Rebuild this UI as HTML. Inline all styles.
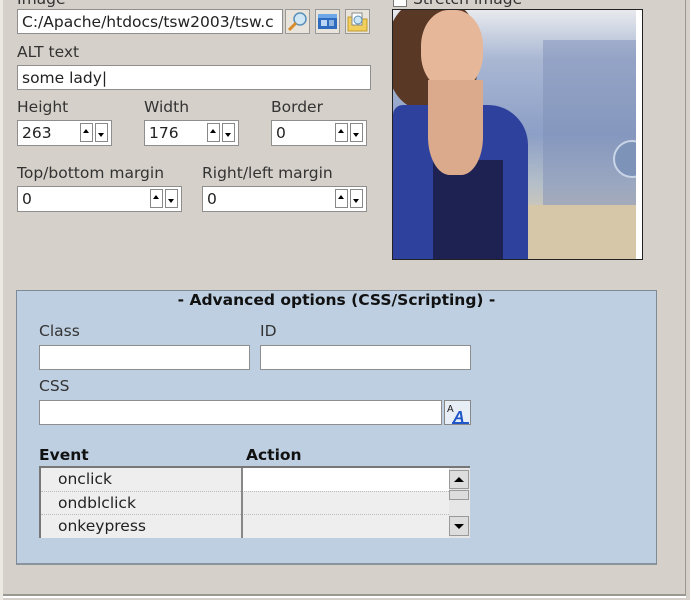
<!DOCTYPE html>
<html><head><meta charset="utf-8"><style>
body{margin:0;width:690px;height:600px;background:#d5d1ca;position:relative;overflow:hidden;font-family:"DejaVu Sans","Liberation Sans",sans-serif;font-size:15.5px;color:#222}
.a{position:absolute}
.lbl{position:absolute;font-size:15.5px;line-height:18px;color:#333}
.in{position:absolute;background:#fff;border:1px solid #8e8e8e;box-sizing:border-box;font-size:15.5px;line-height:24px;padding-left:4px;color:#222;white-space:nowrap;overflow:hidden}
.sp{position:absolute;width:30px;height:20px;top:2px}
.sp b{position:absolute;top:0;width:13px;height:19px;border:1px solid #888;background:#fff;box-sizing:border-box}
.sp b:first-child{left:0}.sp b:last-child{left:15px}
.sp b:first-child:after{content:"";position:absolute;left:2px;top:5px;border:3px solid transparent;border-bottom:4px solid #000;border-top:0}
.sp b:last-child:after{content:"";position:absolute;left:2px;top:9px;border:3px solid transparent;border-top:4px solid #000;border-bottom:0}
.ib{position:absolute;top:9px;width:25px;height:25px;border:1px solid #999;box-sizing:border-box;background:#e8e4dc}
.row{position:absolute;left:0;width:408px;height:23px;font-size:15.5px;line-height:23px}
</style></head><body>
<div class="a" style="left:0;top:0;width:3px;height:600px;background:#ece9e3"></div>
<div class="a" style="left:685px;top:0;width:1px;height:596px;background:#9a9891"></div>
<div class="a" style="left:3px;top:594px;width:683px;height:2px;background:#9a9891"></div>
<div class="a" style="left:3px;top:596px;width:683px;height:2px;background:#fff"></div>

<div class="lbl" style="left:17px;top:-10px">Image</div>
<div class="in" style="left:17px;top:9px;width:266px;height:25px">C:/Apache/htdocs/tsw2003/tsw.c</div>
<div class="ib" style="left:285px"><svg width="23" height="23"><circle cx="14" cy="9" r="6" fill="#cfe6f5" stroke="#5a8fb8" stroke-width="1.5"/><line x1="10" y1="13" x2="3" y2="20" stroke="#d98a2a" stroke-width="3"/></svg></div>
<div class="ib" style="left:315px"><svg width="23" height="23"><rect x="2" y="4" width="19" height="15" fill="#2f6cc0"/><rect x="2" y="4" width="19" height="4" fill="#6fa8e8"/><rect x="5" y="10" width="6" height="6" fill="#bcd6f5"/><rect x="13" y="10" width="5" height="6" fill="#8fb4e0"/></svg></div>
<div class="ib" style="left:345px"><svg width="23" height="23"><path d="M2 7h7l2 2h10v12H2z" fill="#f2cf5a" stroke="#c09a30"/><rect x="6" y="3" width="10" height="12" fill="#fff" stroke="#888"/><circle cx="12" cy="10" r="4" fill="#cfe6f5" stroke="#5a8fb8"/></svg></div>

<div class="lbl" style="left:17px;top:43px">ALT text</div>
<div class="in" style="left:17px;top:65px;width:354px;height:25px">some lady|</div>

<div class="lbl" style="left:17px;top:98px">Height</div>
<div class="lbl" style="left:144px;top:98px">Width</div>
<div class="lbl" style="left:271px;top:98px">Border</div>
<div class="in" style="left:17px;top:120px;width:95px;height:26px">263<div class="sp" style="left:62px"><b></b><b></b></div></div>
<div class="in" style="left:144px;top:120px;width:95px;height:26px">176<div class="sp" style="left:62px"><b></b><b></b></div></div>
<div class="in" style="left:271px;top:120px;width:96px;height:26px">0<div class="sp" style="left:63px"><b></b><b></b></div></div>

<div class="lbl" style="left:17px;top:164px">Top/bottom margin</div>
<div class="lbl" style="left:202px;top:164px">Right/left margin</div>
<div class="in" style="left:17px;top:186px;width:165px;height:26px">0<div class="sp" style="left:132px"><b></b><b></b></div></div>
<div class="in" style="left:202px;top:186px;width:165px;height:26px">0<div class="sp" style="left:132px"><b></b><b></b></div></div>

<div class="a" style="left:393px;top:-5px;width:12px;height:10px;background:#fff;border:1px solid #777"></div>
<div class="lbl" style="left:413px;top:-10px">Stretch image</div>

<div class="a" style="left:392px;top:9px;width:251px;height:251px;border:1px solid #222;box-sizing:border-box;overflow:hidden;background:linear-gradient(180deg,#e8eaee 0%,#a9b7d3 20%,#8c9fc6 50%,#b5bfc9 70%,#d8cbb2 85%,#e3dccf 100%)">
<div class="a" style="left:150px;top:30px;width:95px;height:180px;background:#7f8fb7;opacity:.5"></div>
<div class="a" style="left:-5px;top:-10px;width:90px;height:110px;background:#5a3826;border-radius:40%"></div>
<div class="a" style="left:28px;top:0px;width:62px;height:80px;border-radius:45%;background:#e6b899"></div>
<div class="a" style="left:0;top:95px;width:135px;height:160px;background:#2e419c;border-radius:10px 40px 0 0"></div>
<div class="a" style="left:40px;top:150px;width:70px;height:100px;background:#1d2252"></div>
<div class="a" style="left:35px;top:70px;width:55px;height:95px;background:#dba98c;border-radius:0 0 40% 40%"></div>
<div class="a" style="left:135px;top:195px;width:110px;height:60px;background:#d7c7a9"></div>
<div class="a" style="left:220px;top:130px;width:34px;height:34px;border-radius:50%;background:#7e93b8;border:2px solid #c9d4e6"></div>
<div class="a" style="left:243px;top:0;width:8px;height:251px;background:#fff"></div>
</div>

<div class="a" style="left:16px;top:290px;width:641px;height:275px;background:#bdcfe0;border:1px solid #7e8a96;box-sizing:border-box;border-bottom:2px solid #8a949c"></div>
<div class="lbl" style="left:16px;top:291px;width:641px;text-align:center;font-weight:bold;color:#111">- Advanced options (CSS/Scripting) -</div>
<div class="lbl" style="left:39px;top:322px">Class</div>
<div class="lbl" style="left:260px;top:322px">ID</div>
<div class="in" style="left:39px;top:345px;width:211px;height:25px"></div>
<div class="in" style="left:260px;top:345px;width:211px;height:25px"></div>
<div class="lbl" style="left:39px;top:377px">CSS</div>
<div class="in" style="left:39px;top:400px;width:403px;height:25px"></div>
<div class="a" style="left:444px;top:400px;width:27px;height:25px;border:1px solid #888;box-sizing:border-box;background:#e8eef5"><svg width="25" height="23"><text x="2" y="11" font-size="10" font-family="Liberation Sans" fill="#222">A</text><text x="8" y="21" font-size="16" font-weight="bold" font-style="italic" font-family="Liberation Sans" fill="#1f56c8">A</text><line x1="7" y1="22" x2="24" y2="22" stroke="#1f56c8" stroke-width="2"/></svg></div>
<div class="lbl" style="left:39px;top:446px;font-weight:bold;color:#111">Event</div>
<div class="lbl" style="left:246px;top:446px;font-weight:bold;color:#111">Action</div>
<div class="a" style="left:39px;top:466px;width:431px;height:72px;background:#eeeeee;border-top:2px solid #777;border-left:2px solid #777;box-sizing:border-box;overflow:hidden">
<div class="row" style="top:0"><span style="position:absolute;left:17px">onclick</span><div class="a" style="left:202px;top:0;width:206px;height:23px;background:#fff"></div></div>
<div class="row" style="top:23px;border-top:1px dotted #bbb"><span style="position:absolute;left:17px">ondblclick</span></div>
<div class="row" style="top:46px;border-top:1px dotted #bbb"><span style="position:absolute;left:17px">onkeypress</span></div>
<div class="a" style="left:200px;top:0;width:2px;height:72px;background:#888"></div>
<div class="a" style="left:408px;top:0;width:21px;height:72px;background:#e6e6e6"></div>
<div class="a" style="left:408px;top:2px;width:20px;height:19px;background:#ddd;border:1px solid #999;box-sizing:border-box"><div class="a" style="left:4px;top:6px;border:5px solid transparent;border-bottom:5px solid #000;border-top:0"></div></div>
<div class="a" style="left:408px;top:22px;width:20px;height:10px;background:#ddd;border:1px solid #999;box-sizing:border-box"></div>
<div class="a" style="left:408px;top:48px;width:20px;height:20px;background:#ddd;border:1px solid #999;box-sizing:border-box"><div class="a" style="left:4px;top:7px;border:5px solid transparent;border-top:5px solid #000;border-bottom:0"></div></div>
</div>
</body></html>
